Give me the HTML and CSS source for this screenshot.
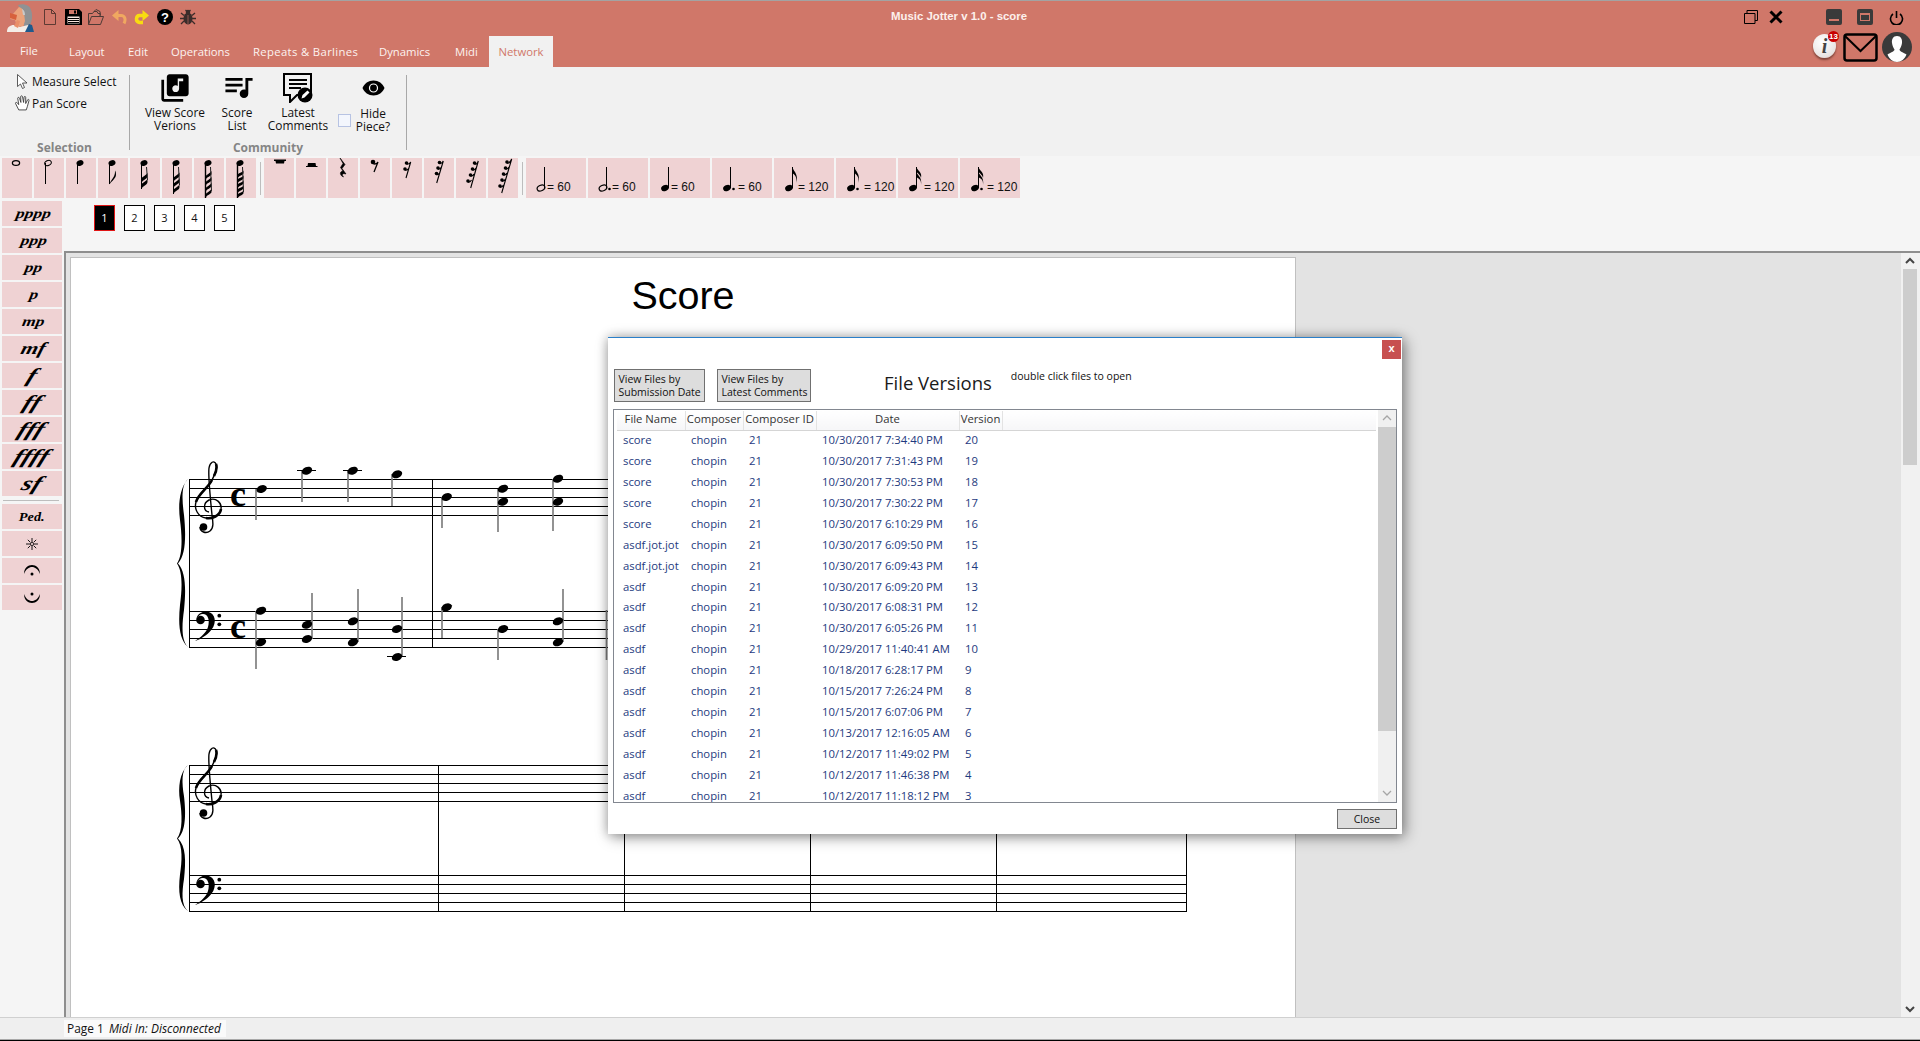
FILE: index.html
```html
<!DOCTYPE html>
<html lang="en">
<head>
<meta charset="utf-8">
<title>Music Jotter v 1.0 - score</title>
<link rel="stylesheet" href="styles.css">
</head>
<body>
<div class="app">
  <header class="header">
    <div class="title-row">
      <div class="quick">
        <svg class="ic-avatar" width="28" height="28" viewBox="0 0 28 28"><path d="M12 1c5-2 12 0 13 5 2 5 1 12-1 15l-6 2V8C16 6 13 4 12 1z" fill="#8f9294"/><path d="M13 3c3 1 5 3 5 6l1 8-2 6-6-1-2-6-5-1 3-5z" fill="#eba27a"/><path d="M4 9l7 2-1 5-6-2z" fill="#d7603c"/><path d="M16 5c2 1 3 3 3 6l-2 0z" fill="#c9c9c9"/><path d="M1 28c0-5 3-7 7-7l6 2 8-2 2 2-4 5z" fill="#f3eee8"/><path d="M8 22l3-6 3 1-2 7z" fill="#e98f68"/><path d="M19 28l4-8 3 1 2 7z" fill="#1f5a8c"/></svg>
        <svg class="ic-new" width="12" height="16" viewBox="0 0 12 16"><path d="M.5.5h7l4 4v11H.5zM7.500.5v4h4" fill="none" stroke="#5d3a33"/></svg>
        <svg class="ic-save" width="17" height="16" viewBox="0 0 17 16"><path d="M0 0h14l3 3v13H0z"/><path d="M4 1h8v4H4z" fill="#d07769"/><path d="M9 1.500h2v3H9z"/><path d="M2.500 7.500h12v7h-12z" fill="#f7e4de"/><path d="M3 9.500h11M3 11.500h11M3 13.500h11" stroke="#000"/></svg>
        <svg class="ic-open" width="16" height="16" viewBox="0 0 16 16"><path d="M.5 15.500V4.500h4l1.500-2h3l1 2h2v3M.5 15.500h12l3-8H3.500zM6 2.500l2-2 4 2 .5 4" fill="none" stroke="#4d3a36"/></svg>
        <svg class="ic-undo" width="15" height="15" viewBox="0 0 15 15"><path d="M6 5.500h3c4 0 5 4 3 8" fill="none" stroke="#f0a860" stroke-width="3"/><path d="M0 5.500 6.500 0v11z" fill="#f0a860"/></svg>
        <svg class="ic-redo" width="15" height="15" viewBox="0 0 15 15"><path d="M10 5.500H5.500C2 5.500 1 11.500 5.500 12.500H9" fill="none" stroke="#f8dc10" stroke-width="3.500"/><path d="M15 5.500 8.500 0v11z" fill="#f8dc10"/></svg>
        <svg class="ic-help" width="16" height="16" viewBox="0 0 16 16"><circle cx="8" cy="8" r="8"/><text x="8" y="13" class="help-mark" text-anchor="middle">?</text></svg>
        <svg class="ic-bug" width="16" height="16" viewBox="0 0 16 16"><g fill="#3a2c2a"><ellipse cx="8" cy="9.500" rx="4.500" ry="6"/><circle cx="8" cy="3" r="2.300"/></g><path d="M8 6v9" stroke="#d07769" stroke-width=".6"/><path d="M1 4l3 2.500M15 4l-3 2.500M0 9.500h4M16 9.500h-4M1 15l3-3M15 15l-3-3M5.500 1 7 2.500M10.500 1 9 2.500" stroke="#3a2c2a" stroke-width="1.300" fill="none"/></svg>
      </div>
      <div class="app-title">Music Jotter v 1.0 - score</div>
      <div class="win-ctrls">
        <svg class="ic-restore" width="14" height="14" viewBox="0 0 14 14"><path d="M.5 3.500h10.500v10H.5zM3 3.500V.5h10.500v10H11" fill="none" stroke="#000"/></svg>
        <svg class="ic-x" width="14" height="14" viewBox="0 0 14 14"><path d="M1.500 1.500l11 11M12.500 1.500l-11 11" stroke="#000" stroke-width="3"/></svg>
        <svg class="ic-tile" width="16" height="16" viewBox="0 0 16 16"><rect width="16" height="16" rx="2" fill="#3a3a3a"/><rect x="3" y="10" width="10" height="2" fill="#d07769"/></svg>
        <svg class="ic-tile2" width="16" height="16" viewBox="0 0 16 16"><rect width="16" height="16" rx="2" fill="#3a3a3a"/><rect x="3" y="4" width="10" height="8" fill="#d07769"/><rect x="4" y="6" width="8" height="5" fill="#3a3a3a"/></svg>
        <svg class="ic-power" width="15" height="14" viewBox="0 0 15 14"><path d="M4 3a6 6 0 1 0 7 0M7.500 0v7" fill="none" stroke="#000" stroke-width="1.600"/></svg>
      </div>
    </div>
    <nav class="tabs">
      <span class="tab tab-file">File</span>
      <span class="tab tab-layout">Layout</span>
      <span class="tab tab-edit">Edit</span>
      <span class="tab tab-ops">Operations</span>
      <span class="tab tab-rep">Repeats &amp; Barlines</span>
      <span class="tab tab-dyn">Dynamics</span>
      <span class="tab tab-midi">Midi</span>
      <span class="tab tab-active">Network</span>
      <div class="account">
        <div class="info-ball"><span class="info-i">i</span><span class="badge">13</span></div>
        <svg class="ic-mail" width="35" height="29" viewBox="0 0 35 29"><rect x="1.500" y="1.500" width="32" height="26" rx="2.500" fill="none" stroke="#000" stroke-width="2.500"/><path d="M2 3l15.500 15L33 3" fill="none" stroke="#000" stroke-width="2"/></svg>
        <svg class="ic-user" width="30" height="30" viewBox="0 0 30 30"><ellipse cx="15" cy="15" rx="15" ry="15" fill="#3a3a3a"/><path d="M15 4c4 0 5.500 3.500 5 7-.4 3-1.500 5-2.500 6.500 0 2 4 3 7 5C23 27 19 30 15 30S7 27 5.500 22.500c3-2 7-3 7-5-1-1.500-2.100-3.500-2.500-6.500-.5-3.500 1-7 5-7z" fill="#fff"/></svg>
      </div>
    </nav>
  </header>

  <section class="ribbon">
    <div class="group group-sel">
      <div class="sel-row">
        <svg class="ic-cursor" width="11" height="15" viewBox="0 0 11 15"><path d="M.5.5v12l3-2.500 2 4.500 2-1-2-4.500h4.500z" fill="#fff" stroke="#333" stroke-width=".8"/></svg>
        <span>Measure Select</span>
      </div>
      <div class="sel-row sel-pan">
        <svg class="ic-hand" width="17" height="16" viewBox="0 0 15 15"><path d="M4 14 1 8c-.5-1 1-1.500 1.500-.5L4 9 3 3c0-1 1.500-1 1.700 0L6 7 5.800 1.500c0-1 1.500-1 1.700 0L8.500 7 9 2c.2-1 1.500-.8 1.500.2V8l1.800-3.500c.5-.8 1.700-.2 1.300.7L12 11l-1 3z" fill="#fff" stroke="#333" stroke-width=".8"/></svg>
        <span>Pan Score</span>
      </div>
      <div class="group-label">Selection</div>
    </div>
    <div class="rib-sep"></div>
    <div class="group group-com">
      <div class="tools">
        <div class="tool tool-view">
          <div class="tool-ic"><svg width="30" height="30" viewBox="1 1 22 22"><path d="M20 2H8c-1.100 0-2 .9-2 2v12c0 1.100.9 2 2 2h12c1.100 0 2-.9 2-2V4c0-1.100-.9-2-2-2zm-2 5h-3v5.500c0 1.380-1.120 2.500-2.500 2.500S10 13.880 10 12.500s1.120-2.500 2.500-2.500c.57 0 1.080.19 1.500.51V5h4v2zM4 6H2v14c0 1.100.9 2 2 2h14v-2H4V6z"/></svg></div>
          <span>View Score<br>Verions</span>
        </div>
        <div class="tool tool-list">
          <div class="tool-ic"><svg width="30" height="24" viewBox="2 5 21 16"><path d="M15 6H3v2h12V6zm0 4H3v2h12v-2zM3 16h8v-2H3v2zM17 6v8.180c-.31-.11-.65-.18-1-.18-1.660 0-3 1.340-3 3s1.340 3 3 3 3-1.340 3-3V8h3V6h-5z"/></svg></div>
          <span>Score<br>List</span>
        </div>
        <div class="tool tool-latest">
          <div class="tool-ic"><svg width="30" height="30" viewBox="0 0 30 30"><path d="M1 1h27v21h-14l-7 7v-7H1z" fill="none" stroke="#000" stroke-width="2"/><path d="M6 7h18M6 11h18M6 15h12" stroke="#000" stroke-width="2"/><circle cx="22" cy="22" r="7.500"/><path d="M18.500 25.500l1-3.500 5-4.500 2 2-5 5z" fill="#fff"/></svg></div>
          <span>Latest<br>Comments</span>
        </div>
        <div class="hide-tool">
          <div class="checkbox"></div>
          <div class="tool tool-hide">
            <div class="tool-ic"><svg width="27" height="22" viewBox="0 1 24 22"><path d="M12 4.500C7 4.500 2.730 7.610 1 12c1.730 4.390 6 7.500 11 7.500s9.270-3.110 11-7.500c-1.730-4.390-6-7.500-11-7.500z"/><circle cx="12" cy="12" r="4" fill="none" stroke="#fff" stroke-width="1.200"/><circle cx="12" cy="12" r="1.800"/></svg></div>
            <span>Hide<br>Piece?</span>
          </div>
        </div>
      </div>
      <div class="group-label">Community</div>
    </div>
    <div class="rib-sep"></div>
  </section>

  <section class="note-bar">
    <div class="nbtn"><svg viewBox="0 0 30 40"><ellipse cx="14" cy="5" rx="3.600" ry="2.400" fill="none" stroke="#000" stroke-width="1.300"/></svg></div>
    <div class="nbtn"><svg viewBox="0 0 30 40"><ellipse cx="14" cy="5" rx="3.400" ry="2.500" transform="rotate(-25 14 5)" fill="none" stroke="#000"/><path d="M11.500 5v21" stroke="#000"/></svg></div>
    <div class="nbtn"><svg viewBox="0 0 30 40"><ellipse cx="14" cy="5" rx="3.600" ry="2.800" transform="rotate(-25 14 5)"/><path d="M11.500 5v21" stroke="#000"/></svg></div>
    <div class="nbtn"><svg viewBox="0 0 30 40"><ellipse cx="14" cy="5" rx="3.600" ry="2.800" transform="rotate(-25 14 5)"/><path d="M11.500 5v21" stroke="#000"/><path d="M11.500 26.500c1-5 6-7 5.500-14 0 0 1 1 1 4 0 4-4 6-6.500 10z"/></svg></div>
    <div class="nbtn"><svg viewBox="0 0 30 40"><ellipse cx="14" cy="5" rx="3.600" ry="2.800" transform="rotate(-25 14 5)"/><path d="M11.500 5v26" stroke="#000"/><path d="M11.500 31c1-3 6-4 6-7v-3c-1 2-4 3-6 5zM11.500 25c1-3 6-4 6-7v-3c-1 2-4 3-6 5z"/><path d="M16.500 9l1 13" stroke="#222" fill="none"/></svg></div>
    <div class="nbtn"><svg viewBox="0 0 30 40"><ellipse cx="14" cy="5" rx="3.600" ry="2.800" transform="rotate(-25 14 5)"/><path d="M11.500 5v31" stroke="#000"/><path d="M11.500 36c1-3 6-4 6-6.500v-3c-1 2-4 3-6 5zM11.500 30c1-3 6-4 6-6.500v-3c-1 2-4 3-6 5zM11.500 24c1-3 6-4 6-6.500v-3c-1 2-4 3-6 5z"/><path d="M16.500 9l1 18" stroke="#222" fill="none"/></svg></div>
    <div class="nbtn"><svg viewBox="0 0 30 40"><ellipse cx="14" cy="5" rx="3.600" ry="2.800" transform="rotate(-25 14 5)"/><path d="M11.500 5v35" stroke="#000" stroke-width="1.400"/><path d="M11.500 40c1-3 6-4 6-6v-3c-1 2-4 3-6 5zM11.500 34c1-3 6-4 6-6v-3c-1 2-4 3-6 5zM11.500 28c1-3 6-4 6-6v-3c-1 2-4 3-6 5zM11.500 22c1-3 6-4 6-6v-3c-1 2-4 3-6 5z"/><path d="M16.500 9l1 24" stroke="#222" fill="none"/></svg></div>
    <div class="nbtn"><svg viewBox="0 0 30 40"><ellipse cx="14" cy="5" rx="3.600" ry="2.800" transform="rotate(-25 14 5)"/><path d="M11.500 5v35" stroke="#000" stroke-width="1.400"/><path d="M11.500 40c1-2 6-3 6-5v-2.500c-1 2-4 2-6 4zM11.500 35c1-2 6-3 6-5v-2.500c-1 2-4 2-6 4zM11.500 30c1-2 6-3 6-5v-2.500c-1 2-4 2-6 4zM11.500 25c1-2 6-3 6-5v-2.500c-1 2-4 2-6 4zM11.500 20c1-2 6-3 6-5v-2.500c-1 2-4 2-6 4z"/><path d="M16.500 9l1 25" stroke="#222" fill="none"/></svg></div>
    <div class="nsep"></div>
    <div class="nbtn"><svg viewBox="0 0 30 40"><path d="M10 1.500h12v1.500h-1.500l-.5 2.500h-8l-.5-2.500H10z"/></svg></div>
    <div class="nbtn"><svg viewBox="0 0 30 40"><path d="M12 5h7.500l.5 3h1.500v1H10V8h1.500z"/></svg></div>
    <div class="nbtn"><svg viewBox="0 0 30 40"><path d="M12 0l5 6.500-3 4 4 5.500c-3-1-5 0-2.500 3C11 17 12 13 15 13l-2.500-3.500 2.500-4z" stroke="#000" stroke-width=".6"/></svg></div>
    <div class="nbtn"><svg viewBox="0 0 30 40"><circle cx="13" cy="4" r="2.300"/><path d="M13 5.500c2 1 4 0 5-1.500L14 14" fill="none" stroke="#000" stroke-width="1.300"/></svg></div>
    <div class="nbtn"><svg viewBox="0 0 30 40"><circle cx="14.500" cy="5" r="1.800"/><circle cx="13" cy="11" r="1.800"/><path d="M14.500 6c2 .5 3 0 4.200-2L14 20M13 12c2 .5 3 0 4-2" fill="none" stroke="#000" stroke-width="1.100"/></svg></div>
    <div class="nbtn"><svg viewBox="0 0 30 40"><circle cx="15.500" cy="4.500" r="1.800"/><circle cx="14" cy="10" r="1.800"/><circle cx="12.500" cy="15.500" r="1.800"/><path d="M15.500 5.500c1.500.5 2.500 0 3.800-2.500L12.700 25M14 11c1.500.5 2.500 0 3.500-2M12.500 16.500c1.500.5 2.500 0 3.500-2" fill="none" stroke="#000" stroke-width="1.100"/></svg></div>
    <div class="nbtn"><svg viewBox="0 0 30 40"><circle cx="18.500" cy="5" r="1.800"/><circle cx="16.500" cy="11" r="1.800"/><circle cx="14.500" cy="17" r="1.800"/><circle cx="12" cy="23" r="1.800"/><path d="M18.500 6c1.500.5 3 0 3.800-3L14.700 30M16.500 12c1.500.5 2.500 0 3.500-2M14.500 18c1.500.5 2.500 0 3.500-2M12 24c1.500.5 2.500 0 3.500-2" fill="none" stroke="#000" stroke-width="1.100"/></svg></div>
    <div class="nbtn"><svg viewBox="0 0 30 40"><circle cx="19" cy="4" r="1.800"/><circle cx="17.500" cy="10" r="1.800"/><circle cx="15.500" cy="16" r="1.800"/><circle cx="14" cy="22" r="1.800"/><circle cx="12" cy="28" r="1.800"/><path d="M19 5c1.500.5 3 0 4.700-4L13.700 35M17.500 11c1.500.5 2.500 0 3.500-2M15.500 17c1.500.5 2.500 0 3.500-2M14 23c1.500.5 2.500 0 3.500-2M12 29c1.500.5 2.500 0 3.500-2" fill="none" stroke="#000" stroke-width="1.100"/></svg></div>
    <div class="nsep"></div>
    <div class="tbtn"><svg width="21" height="40" viewBox="0 0 21 40"><ellipse cx="15" cy="30" rx="4" ry="2.800" transform="rotate(-25 15 30)" fill="none" stroke="#000" stroke-width="1.200"/><path d="M18.500 9v21" stroke="#000"/></svg><span>= 60</span></div>
    <div class="tbtn"><svg width="24" height="40" viewBox="0 0 24 40"><ellipse cx="15" cy="30" rx="4" ry="2.800" transform="rotate(-25 15 30)" fill="none" stroke="#000" stroke-width="1.200"/><path d="M18.500 9v21" stroke="#000"/><circle cx="21.500" cy="31" r="1.300"/></svg><span>= 60</span></div>
    <div class="tbtn"><svg width="21" height="40" viewBox="0 0 21 40"><ellipse cx="15" cy="30" rx="4" ry="3" transform="rotate(-25 15 30)"/><path d="M18.500 9v21" stroke="#000"/></svg><span>= 60</span></div>
    <div class="tbtn"><svg width="26" height="40" viewBox="0 0 26 40"><ellipse cx="15" cy="30" rx="4" ry="3" transform="rotate(-25 15 30)"/><path d="M18.500 9v21" stroke="#000"/><circle cx="21.500" cy="31" r="1.300"/></svg><span>= 60</span></div>
    <div class="tbtn"><svg width="24" height="40" viewBox="0 0 24 40"><ellipse cx="15" cy="30" rx="4" ry="3" transform="rotate(-25 15 30)"/><path d="M18.500 9v21" stroke="#000"/><path d="M18.500 9c1 5 6 6 4 16 .5-7-2-8-4-10z"/></svg><span>= 120</span></div>
    <div class="tbtn"><svg width="28" height="40" viewBox="0 0 28 40"><ellipse cx="15" cy="30" rx="4" ry="3" transform="rotate(-25 15 30)"/><path d="M18.500 9v21" stroke="#000"/><path d="M18.500 9c1 5 6 6 4 16 .5-7-2-8-4-10z"/><circle cx="21.500" cy="31" r="1.300"/></svg><span>= 120</span></div>
    <div class="tbtn"><svg width="26" height="40" viewBox="0 0 26 40"><ellipse cx="15" cy="30" rx="4" ry="3" transform="rotate(-25 15 30)"/><path d="M18.500 9v21" stroke="#000"/><path d="M18.500 9c1 4 6 5 4.500 11-.5-3-2.500-4-4.500-6zM18.500 14c1 4 6 5 4.500 13 .5-6-2.500-6-4.500-8z"/></svg><span>= 120</span></div>
    <div class="tbtn"><svg width="27" height="40" viewBox="0 0 27 40"><ellipse cx="15" cy="30" rx="4" ry="3" transform="rotate(-25 15 30)"/><path d="M18.500 9v21" stroke="#000"/><path d="M18.500 9c1 4 6 5 4.500 11-.5-3-2.500-4-4.500-6zM18.500 14c1 4 6 5 4.500 13 .5-6-2.500-6-4.500-8z"/><circle cx="21.500" cy="31" r="1.300"/></svg><span>= 120</span></div>
  </section>

  <section class="work">
    <aside class="dyn-col">
      <div class="dbtn"><span class="dyn-p">pppp</span></div>
      <div class="dbtn"><span class="dyn-p">ppp</span></div>
      <div class="dbtn"><span class="dyn-p">pp</span></div>
      <div class="dbtn"><span class="dyn-p">p</span></div>
      <div class="dbtn"><span class="dyn-p">mp</span></div>
      <div class="dbtn"><span class="dyn-mf">mf</span></div>
      <div class="dbtn"><span class="dyn-f">f</span></div>
      <div class="dbtn"><span class="dyn-f">ff</span></div>
      <div class="dbtn"><span class="dyn-f">fff</span></div>
      <div class="dbtn"><span class="dyn-f">ffff</span></div>
      <div class="dbtn"><span class="dyn-f">sf</span></div>
      <div class="dyn-sep"></div>
      <div class="dbtn"><span class="dyn-ped">Ped.</span></div>
      <div class="dbtn"><svg width="12" height="12" viewBox="0 0 12 12"><path d="M6 0v4M6 8v4M0 6h4M8 6h4M1.800 1.800l2.500 2.500M7.700 7.700l2.500 2.500M10.200 1.800 7.700 4.300M4.300 7.700l-2.500 2.500" stroke="#000" stroke-width=".9"/><circle cx="6" cy="6" r="1.600" fill="none" stroke="#000" stroke-width=".8"/></svg></div>
      <div class="dbtn"><svg width="18" height="13" viewBox="0 0 18 13"><path d="M1 10C1 4 5 1 9 1s8 3 8 9C15 5 12 3 9 3s-6 2-8 7z"/><circle cx="9" cy="10" r="1.500"/></svg></div>
      <div class="dbtn"><svg width="18" height="13" viewBox="0 0 18 13"><path d="M1 3c0 6 4 9 8 9s8-3 8-9c-2 5-5 7-8 7s-6-2-8-7z"/><circle cx="9" cy="3" r="1.500"/></svg></div>
    </aside>
    <main class="main">
      <div class="pages">
        <span class="pg pg-on">1</span>
        <span class="pg">2</span>
        <span class="pg">3</span>
        <span class="pg">4</span>
        <span class="pg">5</span>
      </div>
      <div class="score-frame">
        <div class="score-view">
          <div class="page">
            <h1 class="score-title">Score</h1>
            <svg class="music" width="1224" height="698" viewBox="71 317 1224 698">
              <defs>
                <g id="treble">
                  <path d="M209 512C203 511 203 503 209 500C216 497 222 503 221 509C220 516 212 519 206 518C198 517 194 509 196 502C198 494 208 488 212 480C215 474 218 468 216 464C214 460 210 462 209 468C208 476 210 495 212 515C213 522 214 528 210 531C206 534 200 532 200 527" fill="none" stroke="#000" stroke-width="1.400"/>
                  <path d="M196 502C198 494 208 488 212 480M221 509C220 516 212 519 206 518M214 476C216 472 217.500 468 216 464" fill="none" stroke="#000" stroke-width="2.600"/>
                  <circle cx="203.500" cy="527" r="3.800"/>
                </g>
                <g id="bass">
                  <circle cx="200.500" cy="620" r="4.300"/>
                  <path d="M196.500 619C197 613 205 610 210 612.500C217 616 216 626 209.500 632C205 636.500 199 640 195 641C201 637 206 633 208 627C210 620 208 614 203 614C200 614 198 616 196.500 619z"/>
                  <circle cx="219.300" cy="615.700" r="1.900"/><circle cx="219.300" cy="624.300" r="1.900"/>
                </g>
                <path id="brace" d="M188 479C181 485 182 500 184 515C186 535 186 555 178 563.500C186 572 186 590 184 610C182 625 181 640 188 647C179.500 640 178 625 180 605C182 590 183 572 177 563.500C183 555 182 535 180 520C178 505 179.500 488 188 479z"/>
                <ellipse id="head" cx="0" cy="0" rx="5.400" ry="3.700" transform="rotate(-22)"/>
              </defs>
              <path class="staff" d="M189 479.500H1187M189 488.500H1187M189 497.500H1187M189 506.500H1187M189 515.500H1187M189 611.500H1187M189 620.500H1187M189 629.500H1187M189 638.500H1187M189 647.500H1187M189.500 479V648M432.500 479V648"/>
              <use href="#brace"/>
              <use href="#treble"/>
              <use href="#bass"/>
              <text class="common" x="238" y="505.500" text-anchor="middle">c</text>
              <text class="common" x="238" y="637.500" text-anchor="middle">c</text>
              <path class="stems" d="M256 489V520M302 471V502M348 471V502M392 474V506M442 497V528M498 489V532M553 479V531M256 611V669M312 593V639M358 589V642M402 597V657M442 607V638M498 629V660M563 589V642M606.500 610V660"/>
              <path class="staff" d="M297 470.500H316M343 470.500H362M387 656.500H406"/>
              <use href="#head" x="261.700" y="489"/><use href="#head" x="307" y="470.700"/><use href="#head" x="352.700" y="470.700"/><use href="#head" x="397" y="474.300"/>
              <use href="#head" x="446.700" y="497"/><use href="#head" x="503" y="488.700"/><use href="#head" x="503" y="501.700"/><use href="#head" x="558" y="478.700"/><use href="#head" x="558" y="501.700"/>
              <use href="#head" x="261" y="610.700"/><use href="#head" x="261" y="642.300"/><use href="#head" x="307" y="624.700"/><use href="#head" x="307" y="639"/><use href="#head" x="353" y="621.300"/><use href="#head" x="353" y="642.300"/><use href="#head" x="397" y="629"/><use href="#head" x="397" y="657"/>
              <use href="#head" x="446.700" y="607.300"/><use href="#head" x="503" y="629"/><use href="#head" x="558" y="621.300"/><use href="#head" x="558" y="642.300"/>
              <path class="staff" d="M189 765.500H1187M189 774.500H1187M189 783.500H1187M189 792.500H1187M189 801.500H1187M189 875.500H1187M189 884.500H1187M189 893.500H1187M189 902.500H1187M189 911.500H1187M189.500 765V912M438.500 765V912M624.500 765V912M810.500 765V912M996.500 765V912M1186.500 765V912"/>
              <use href="#brace" transform="translate(0 765.300) scale(1 .869) translate(0 -479.300)"/>
              <use href="#treble" y="286"/>
              <use href="#bass" y="264"/>
            </svg>
          </div>
        </div>
        <div class="vscroll">
          <svg class="arrow" width="12" height="16" viewBox="0 0 12 16"><path d="M2 10l4-4 4 4" fill="none" stroke="#444" stroke-width="2"/></svg>
          <div class="vthumb"></div>
          <svg class="arrow arrow-end" width="12" height="16" viewBox="0 0 12 16"><path d="M2 6l4 4 4-4" fill="none" stroke="#444" stroke-width="2"/></svg>
        </div>
      </div>
    </main>
  </section>

  <footer class="status">
    <div class="status-text">Page 1 <em>Midi In: Disconnected</em></div>
  </footer>

  <div class="dialog">
    <div class="dlg-top"><div class="dlg-close">x</div></div>
    <div class="dlg-bar">
      <div class="dlg-btn dlg-btn1">View Files by<br>Submission Date</div>
      <div class="dlg-btn dlg-btn2">View Files by<br>Latest Comments</div>
      <div class="dlg-title">File Versions</div>
      <div class="dlg-hint">double click files to open</div>
    </div>
    <div class="listbox">
      <div class="list-area">
        <table class="files">
          <colgroup><col class="c-name"><col class="c-comp"><col class="c-id"><col class="c-date"><col class="c-ver"><col></colgroup>
          <thead><tr><th>File Name</th><th>Composer</th><th>Composer ID</th><th>Date</th><th>Version</th><th></th></tr></thead>
          <tbody>
            <tr><td>score</td><td>chopin</td><td>21</td><td>10/30/2017 7:34:40 PM</td><td>20</td><td></td></tr>
            <tr><td>score</td><td>chopin</td><td>21</td><td>10/30/2017 7:31:43 PM</td><td>19</td><td></td></tr>
            <tr><td>score</td><td>chopin</td><td>21</td><td>10/30/2017 7:30:53 PM</td><td>18</td><td></td></tr>
            <tr><td>score</td><td>chopin</td><td>21</td><td>10/30/2017 7:30:22 PM</td><td>17</td><td></td></tr>
            <tr><td>score</td><td>chopin</td><td>21</td><td>10/30/2017 6:10:29 PM</td><td>16</td><td></td></tr>
            <tr><td>asdf.jot.jot</td><td>chopin</td><td>21</td><td>10/30/2017 6:09:50 PM</td><td>15</td><td></td></tr>
            <tr><td>asdf.jot.jot</td><td>chopin</td><td>21</td><td>10/30/2017 6:09:43 PM</td><td>14</td><td></td></tr>
            <tr><td>asdf</td><td>chopin</td><td>21</td><td>10/30/2017 6:09:20 PM</td><td>13</td><td></td></tr>
            <tr><td>asdf</td><td>chopin</td><td>21</td><td>10/30/2017 6:08:31 PM</td><td>12</td><td></td></tr>
            <tr><td>asdf</td><td>chopin</td><td>21</td><td>10/30/2017 6:05:26 PM</td><td>11</td><td></td></tr>
            <tr><td>asdf</td><td>chopin</td><td>21</td><td>10/29/2017 11:40:41 AM</td><td>10</td><td></td></tr>
            <tr><td>asdf</td><td>chopin</td><td>21</td><td>10/18/2017 6:28:17 PM</td><td>9</td><td></td></tr>
            <tr><td>asdf</td><td>chopin</td><td>21</td><td>10/15/2017 7:26:24 PM</td><td>8</td><td></td></tr>
            <tr><td>asdf</td><td>chopin</td><td>21</td><td>10/15/2017 6:07:06 PM</td><td>7</td><td></td></tr>
            <tr><td>asdf</td><td>chopin</td><td>21</td><td>10/13/2017 12:16:05 AM</td><td>6</td><td></td></tr>
            <tr><td>asdf</td><td>chopin</td><td>21</td><td>10/12/2017 11:49:02 PM</td><td>5</td><td></td></tr>
            <tr><td>asdf</td><td>chopin</td><td>21</td><td>10/12/2017 11:46:38 PM</td><td>4</td><td></td></tr>
            <tr><td>asdf</td><td>chopin</td><td>21</td><td>10/12/2017 11:18:12 PM</td><td>3</td><td></td></tr>
          </tbody>
        </table>
      </div>
      <div class="list-scroll">
        <svg class="l-arrow" width="18" height="17" viewBox="0 0 18 17"><path d="M5 10l4-4 4 4" fill="none" stroke="#a6a6a6" stroke-width="1.300"/></svg>
        <div class="l-thumb"></div>
        <svg class="l-arrow l-arrow-end" width="18" height="17" viewBox="0 0 18 17"><path d="M5 6l4 4 4-4" fill="none" stroke="#a6a6a6" stroke-width="1.300"/></svg>
      </div>
    </div>
    <div class="dlg-foot"><div class="dlg-closebtn">Close</div></div>
  </div>
</div>
</body>
</html>
```

FILE: styles.css
```css
* { box-sizing: border-box; }
html, body { margin: 0; padding: 0; }
body { width: 1920px; height: 1041px; overflow: hidden; background: #f5f5f5; font-family: "Open Sans", "Noto Sans", sans-serif; }
.app { position: relative; width: 1920px; height: 1041px; display: flex; flex-direction: column; overflow: hidden; border-top: 1px solid #a3a3a3; border-bottom: 1px solid #000; background: #f5f5f5; }

.header { height: 66px; background: #d07769; flex: none; }
.title-row { height: 35px; display: grid; grid-template-columns: 1fr auto 1fr; position: relative; }
.quick { position: relative; }
.quick svg, .win-ctrls svg { position: absolute; }
.ic-avatar { left: 6px; top: 3px; }
.ic-new { left: 44px; top: 8px; }
.ic-save { left: 65px; top: 8px; }
.ic-open { left: 88px; top: 8px; }
.ic-undo { left: 112px; top: 9px; }
.ic-redo { left: 134px; top: 9px; }
.ic-help { left: 157px; top: 8px; }
.ic-bug { left: 180px; top: 8px; }
.help-mark { font: 700 13px "Liberation Sans", sans-serif; fill: #fff; }
.app-title { font: 700 11.400px/30px "Liberation Sans", Arial, sans-serif; color: #fdf0ec; white-space: nowrap; margin-left: -2px; }
.win-ctrls { position: relative; }
.ic-restore { left: 717px; top: 9px; }
.ic-x { left: 742px; top: 9px; }
.ic-tile { left: 799px; top: 8px; }
.ic-tile2 { left: 830px; top: 8px; }
.ic-power { left: 862px; top: 10px; }

.tabs { height: 31px; display: flex; position: relative; font-size: 11.300px; color: #fdf3f0; line-height: 31px; }
.tab { display: block; white-space: nowrap; }
.tab-file { margin-left: 20px; line-height: 29px; width: 49px; }
.tab-layout { width: 59px; }
.tab-edit { width: 43px; }
.tab-ops { width: 82px; }
.tab-rep { width: 126px; letter-spacing: .35px; }
.tab-dyn { width: 76px; }
.tab-midi { width: 34px; }
.tab-active { width: 64px; background: #f1f1f1; color: #d07769; text-align: center; }
.account { position: absolute; left: 0; top: 0; width: 100%; height: 0; }
.account svg { position: absolute; }
.ic-mail { left: 1843px; top: -3px; }
.ic-user { left: 1882px; top: -4px; }
.info-ball { position: absolute; left: 1813px; top: -2px; width: 23px; height: 24px; border-radius: 50%; background: radial-gradient(circle at 40% 35%, #fff, #e8e4e2 70%, #bdb5b2); box-shadow: 0 2px 2px rgba(60,30,20,.55); text-align: center; font: italic 700 20px/24px "Liberation Serif", serif; color: #444; }
.info-i { display: block; }
.badge { position: absolute; left: 15px; top: -3px; width: 11px; height: 11px; border-radius: 50%; background: #c80000; color: #fff; font: 700 8px/11px "Liberation Sans", sans-serif; }

.ribbon { height: 89px; flex: none; background: #f1f1f1; display: flex; font-size: 11.900px; color: #111; line-height: 13px; }
.group { display: flex; flex-direction: column; position: relative; }
.group-sel { width: 129px; padding-top: 3px; }
.group-com { width: 276px; }
.group-label { margin-top: auto; height: 16px; line-height: 16px; text-align: center; font-weight: 700; font-size: 12px; color: #858585; }
.sel-row { display: flex; align-items: center; height: 22px; padding-left: 17px; gap: 4px; white-space: nowrap; }
.sel-pan { padding-left: 14px; gap: 1px; }
.rib-sep { width: 1px; height: 75px; margin-top: 8px; background: #a8a8a8; }
.tools { display: flex; }
.tool { display: flex; flex-direction: column; align-items: center; text-align: center; padding-top: 6px; white-space: nowrap; }
.tool-ic { height: 30px; display: flex; align-items: center; justify-content: center; margin-bottom: 3px; }
.tool-view { margin-left: 15px; width: 60px; }
.tool-list { width: 64px; }
.tool-list .tool-ic { padding-left: 4px; }
.tool-latest { width: 58px; }
.hide-tool { display: flex; margin-left: 11px; }
.checkbox { width: 13px; height: 13px; margin-top: 47px; border: 1px solid #b7c3e3; background: #f3f6fd; }
.tool-hide { width: 44px; }
.tool-hide .tool-ic { margin-bottom: 4px; }

.note-bar { flex: none; display: flex; gap: 2px; height: 40px; margin-top: 2px; padding-left: 2px; }
.nbtn { width: 30px; height: 40px; background: #efd2d3; overflow: hidden; }
.nbtn svg { display: block; width: 30px; height: 40px; }
.nsep { width: 1px; height: 33px; margin: 4px 1px 0 2px; background: #bdbdbd; }
.tbtn { width: 60px; height: 40px; background: #efd2d3; display: flex; align-items: flex-end; font: 12px/14px "Liberation Sans", Arial, sans-serif; color: #111; }
.tbtn svg { display: block; flex: none; }
.tbtn span { padding-bottom: 4px; white-space: nowrap; }

.work { flex: 1; min-height: 0; display: flex; margin-top: 3px; }
.dyn-col { width: 64px; flex: none; padding-left: 2px; display: flex; flex-direction: column; gap: 2px; }
.dbtn { width: 60px; height: 25px; background: #efd2d3; display: flex; align-items: center; justify-content: center; font-family: "Liberation Serif", serif; font-style: italic; font-weight: 700; color: #000; line-height: 25px; overflow: hidden; }
.dyn-p { display: inline-block; font-size: 14px; transform: translateX(1.500px) scaleX(1.25) skewX(-8deg); }
.dyn-mf { display: inline-block; font-size: 17px; transform: translateX(1px) scaleX(1.3) skewX(-12deg); }
.dyn-f { display: inline-block; font-size: 20px; transform: scaleX(1.35) skewX(-16deg); }
.dyn-ped { display: inline-block; font-size: 13px; transform: scaleX(1.1); }
.dyn-sep { width: 56px; height: 1px; margin: 2px 0 1px 1px; background: #bdbdbd; }

.main { flex: 1; min-width: 0; display: flex; flex-direction: column; }
.pages { flex: none; display: flex; gap: 9px; padding: 4px 0 0 30px; height: 50px; }
.pg { width: 21px; height: 26px; border: 1px solid #000; background: #fff; font: 11px/24px "Open Sans", sans-serif; text-align: center; color: #111; }
.pg-on { background: #000; border-color: #e01515; color: #fff; }
.score-frame { flex: 1; min-height: 0; display: flex; border-top: 2px solid #8e8e8e; }
.score-view { flex: 1; min-width: 0; border-left: 2px solid #8e8e8e; background: #e3e3e3; overflow: hidden; }
.page { width: 1226px; height: 770px; margin: 4px 0 0 4px; background: #fff; border: 1px solid #c0c0c0; border-bottom: 0; }
.score-title { margin: 15px 0 0; font: 400 39.500px/44px "Liberation Sans", Arial, sans-serif; text-align: center; color: #000; }
.music { display: block; }
.staff { stroke: #000; stroke-width: 1; fill: none; }
.stems { stroke: #808080; stroke-width: 1.700; fill: none; }
.common { font: 700 36px "Liberation Serif", serif; }
.vscroll { width: 20px; flex: none; background: #f1f1f1; border-left: 1px solid #e2e2e2; padding-right: 2px; display: flex; flex-direction: column; align-items: center; }
.arrow { display: block; flex: none; }
.vthumb { width: 14px; height: 196px; background: #cdcdcd; flex: none; }
.arrow-end { margin-top: auto; }

.status { flex: none; height: 23px; background: #efefef; border-top: 1px solid #d0d0d0; border-bottom: 1px solid #a8a8a8; padding: 2px 0 0 64px; font-size: 11.900px; color: #111; }
.status-text { display: inline-block; height: 17px; line-height: 17px; padding: 0 5px 0 3px; background: #fafafa; white-space: nowrap; }
.status-text em { margin-left: 2px; }

.dialog { position: absolute; left: 608px; top: 336px; width: 794px; height: 497px; display: flex; flex-direction: column; background: #fff; border-top: 1px solid #2a7fc9; box-shadow: 3px 3px 14px rgba(0,0,0,.4), -1px 0 10px rgba(0,0,0,.2); color: #111; }
.dlg-top { height: 31px; display: flex; justify-content: flex-end; padding: 2px 1px 0 0; flex: none; }
.dlg-close { width: 19px; height: 19px; background: #c75050; color: #fff; font: 700 11px/17px "Liberation Sans", sans-serif; text-align: center; }
.dlg-bar { height: 33px; flex: none; display: flex; align-items: flex-start; padding-left: 6px; }
.dlg-btn { height: 33px; background: #dddddd; border: 1px solid #707070; font-size: 10.500px; line-height: 13px; padding: 3px 0 0 3.500px; white-space: nowrap; }
.dlg-btn1 { width: 91px; }
.dlg-btn2 { width: 94px; margin-left: 12px; }
.dlg-title { margin-left: 73px; font-size: 18.500px; line-height: 28px; white-space: nowrap; color: #1a1a1a; }
.dlg-hint { margin-left: 19px; font-size: 10.500px; line-height: 14px; white-space: nowrap; }
.listbox { height: 394px; width: 784px; margin: 7px 0 0 5px; flex: none; border: 1px solid #828790; display: flex; overflow: hidden; }
.list-area { flex: 1; min-width: 0; padding: 1px 0 0 3px; overflow: hidden; }
.files { border-collapse: collapse; table-layout: fixed; width: 759px; font-size: 11.300px; }
.c-name { width: 68px; } .c-comp { width: 58px; } .c-id { width: 73px; } .c-date { width: 143px; } .c-ver { width: 43px; }
.files th { height: 19px; padding: 0 0 3px; font-weight: 400; color: #333; text-align: center; white-space: nowrap; border-right: 1px solid #e3e3e3; border-bottom: 1px solid #d5d5d5; background: linear-gradient(#ffffff, #f6f6f8); overflow: hidden; }
.files th:last-child { border-right: 0; }
.files td { height: 20.940px; padding: 0 0 2px 6px; color: #1e3a7e; white-space: nowrap; }
.list-scroll { width: 18px; flex: none; margin-left: 1px; background: #f0f0f0; display: flex; flex-direction: column; }
.l-arrow { display: block; flex: none; }
.l-thumb { height: 304px; background: #cdcdcd; flex: none; }
.l-arrow-end { margin-top: auto; }
.dlg-foot { flex: none; display: flex; justify-content: flex-end; margin-top: 6px; padding-right: 5px; }
.dlg-closebtn { width: 60px; height: 20px; background: #dddddd; border: 1px solid #707070; font-size: 10.500px; line-height: 19px; text-align: center; }
```
